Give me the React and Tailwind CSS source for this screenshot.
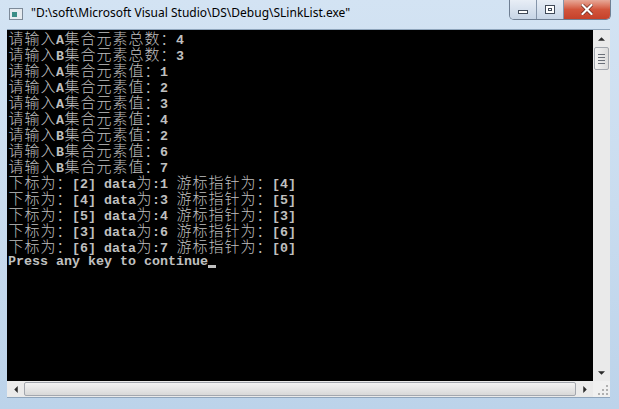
import React from "react";

const lines = [
  "请输入A集合元素总数：4",
  "请输入B集合元素总数：3",
  "请输入A集合元素值：1",
  "请输入A集合元素值：2",
  "请输入A集合元素值：3",
  "请输入A集合元素值：4",
  "请输入B集合元素值：2",
  "请输入B集合元素值：6",
  "请输入B集合元素值：7",
  "下标为：[2] data为:1 游标指针为：[4]",
  "下标为：[4] data为:3 游标指针为：[5]",
  "下标为：[5] data为:4 游标指针为：[3]",
  "下标为：[3] data为:6 游标指针为：[6]",
  "下标为：[6] data为:7 游标指针为：[0]",
];

function ConsoleLine({ text }) {
  const parts = [];
  let run = "";
  const chars = Array.from(text);
  chars.forEach((c, i) => {
    if (c.charCodeAt(0) > 0x2e80) {
      if (run) {
        parts.push(
          <span key={"a" + i} className="whitespace-pre font-bold">
            {run}
          </span>
        );
        run = "";
      }
      parts.push(
        <span
          key={"c" + i}
          className="inline-block w-[16px] text-center text-[15px] leading-[16px] font-light [font-family:'Noto_Sans_CJK_SC',sans-serif]"
        >
          {c}
        </span>
      );
    } else {
      run += c;
    }
  });
  if (run)
    parts.push(
      <span key="end" className="whitespace-pre font-bold">
        {run}
      </span>
    );
  return <div className="h-[16px] whitespace-pre leading-[16px]">{parts}</div>;
}

function Arrow({ dir }) {
  const pts = {
    up: "0,4 4,0 8,4",
    down: "0,0 4,4 8,0",
    left: "4,0 0,4 4,8",
    right: "0,0 4,4 0,8",
  }[dir];
  const vb = dir === "up" || dir === "down" ? "0 0 8 4" : "0 0 4 8";
  const w = dir === "up" || dir === "down" ? 7 : 4;
  const h = dir === "up" || dir === "down" ? 4 : 7;
  return (
    <svg width={w} height={h} viewBox={vb}>
      <polygon points={pts} fill="#2a2a2a" />
    </svg>
  );
}

export default function App() {
  return (
    <div className="w-[619px] h-[409px] overflow-hidden flex flex-col bg-gradient-to-b from-[#d3e3f3] via-[#c9dcef] to-[#bcd3ea] [font-family:'Liberation_Sans',sans-serif]">
      {/* Title bar */}
      <div className="h-[29px] flex items-start relative">
        <div className="mt-[8px] ml-[9px] w-[14px] h-[12px] border border-[#7d8a99] bg-[#e6ebf0] flex items-end">
          <div className="ml-[2px] mb-[2px] w-[5px] h-[5px] bg-[#3b8d86]" />
        </div>
        <div className="ml-[8px] mt-[5px] text-[12px] text-black [font-family:'Noto_Sans',sans-serif] leading-[16px]">
          "D:\soft\Microsoft Visual Studio\DS\Debug\SLinkList.exe"
        </div>
        <div className="absolute right-[8px] top-0 flex h-[20px] rounded-b-[5px] border border-t-0 border-[#6f7f93] overflow-hidden">
          <div className="w-[27px] h-full flex items-center justify-center bg-gradient-to-b from-[#e8eef6] to-[#c7d5e6] border-r border-[#8595aa]">
            <div className="w-[10px] h-[4px] mt-[4px] border border-[#404a58] bg-white" />
          </div>
          <div className="w-[27px] h-full flex items-center justify-center bg-gradient-to-b from-[#e8eef6] to-[#c7d5e6] border-r border-[#8595aa]">
            <div className="w-[10px] h-[9px] border border-[#404a58] flex items-center justify-center bg-white">
              <div className="w-[4px] h-[3px] border border-[#404a58]" />
            </div>
          </div>
          <div className="w-[46px] h-full flex items-center justify-center bg-gradient-to-b from-[#e6a898] via-[#d2553c] to-[#c5412a]">
            <svg width="12" height="11" viewBox="0 0 12 11">
              <path d="M1.5 1 L10.5 10 M10.5 1 L1.5 10" stroke="#5a1a10" strokeWidth="3.4" strokeLinecap="square" />
              <path d="M1.5 1 L10.5 10 M10.5 1 L1.5 10" stroke="#ffffff" strokeWidth="2.2" strokeLinecap="square" />
            </svg>
          </div>
        </div>
      </div>

      {/* Middle */}
      <div className="flex h-[369px]">
        <div className="w-[7px]" />
        <div className="flex flex-col w-[603px] border-t border-[#8fa5bc]">
          <div className="flex h-[351px]">
            <div className="w-[586px] bg-black text-[#c0c0c0] pl-[1px] text-[13.333px] [font-family:'Liberation_Mono',monospace]">
              {lines.map((l, i) => (
                <ConsoleLine key={i} text={l} />
              ))}
              <div className="h-[16px] leading-[16px] whitespace-pre font-bold relative">
                Press any key to continue
                <span className="inline-block w-[8px] h-[3px] bg-[#c0c0c0] align-[-3px]" />
              </div>
            </div>
            {/* vertical scrollbar */}
            <div className="w-[17px] bg-[#eaeaea] flex flex-col items-center">
              <div className="h-[17px] w-full flex items-center justify-center">
                <Arrow dir="up" />
              </div>
              <div className="w-[15px] h-[23px] rounded-[2px] border border-[#a3a7ae] bg-gradient-to-r from-[#f3f3f3] to-[#dcdcdc] flex flex-col items-center justify-center gap-[2px]">
                <div className="w-[7px] h-[1px] bg-[#6a6f78]" />
                <div className="w-[7px] h-[1px] bg-[#6a6f78]" />
                <div className="w-[7px] h-[1px] bg-[#6a6f78]" />
                <div className="w-[7px] h-[1px] bg-[#6a6f78]" />
              </div>
              <div className="flex-1" />
              <div className="h-[17px] w-full flex items-center justify-center">
                <Arrow dir="down" />
              </div>
            </div>
          </div>
          {/* horizontal scrollbar */}
          <div className="flex h-[17px] bg-[#eaeaea] border-b border-[#8fa5bc]">
            <div className="w-[17px] flex items-center justify-center">
              <Arrow dir="left" />
            </div>
            <div className="flex-1 my-[1px] rounded-[2px] border border-[#a3a7ae] bg-gradient-to-b from-[#f3f3f3] to-[#d8d8d8]" />
            <div className="w-[17px] flex items-center justify-center">
              <Arrow dir="right" />
            </div>
            <div className="w-[17px] bg-[#f0f0f0] flex items-end justify-end p-[2px]">
              <svg width="10" height="10" viewBox="0 0 10 10">
                <rect x="8" y="0" width="2" height="2" fill="#b0b0b0" />
                <rect x="8" y="4" width="2" height="2" fill="#b0b0b0" />
                <rect x="8" y="8" width="2" height="2" fill="#b0b0b0" />
                <rect x="4" y="4" width="2" height="2" fill="#b0b0b0" />
                <rect x="4" y="8" width="2" height="2" fill="#b0b0b0" />
                <rect x="0" y="8" width="2" height="2" fill="#b0b0b0" />
              </svg>
            </div>
          </div>
        </div>
        <div className="w-[9px]" />
      </div>
      <div className="flex-1" />
    </div>
  );
}
